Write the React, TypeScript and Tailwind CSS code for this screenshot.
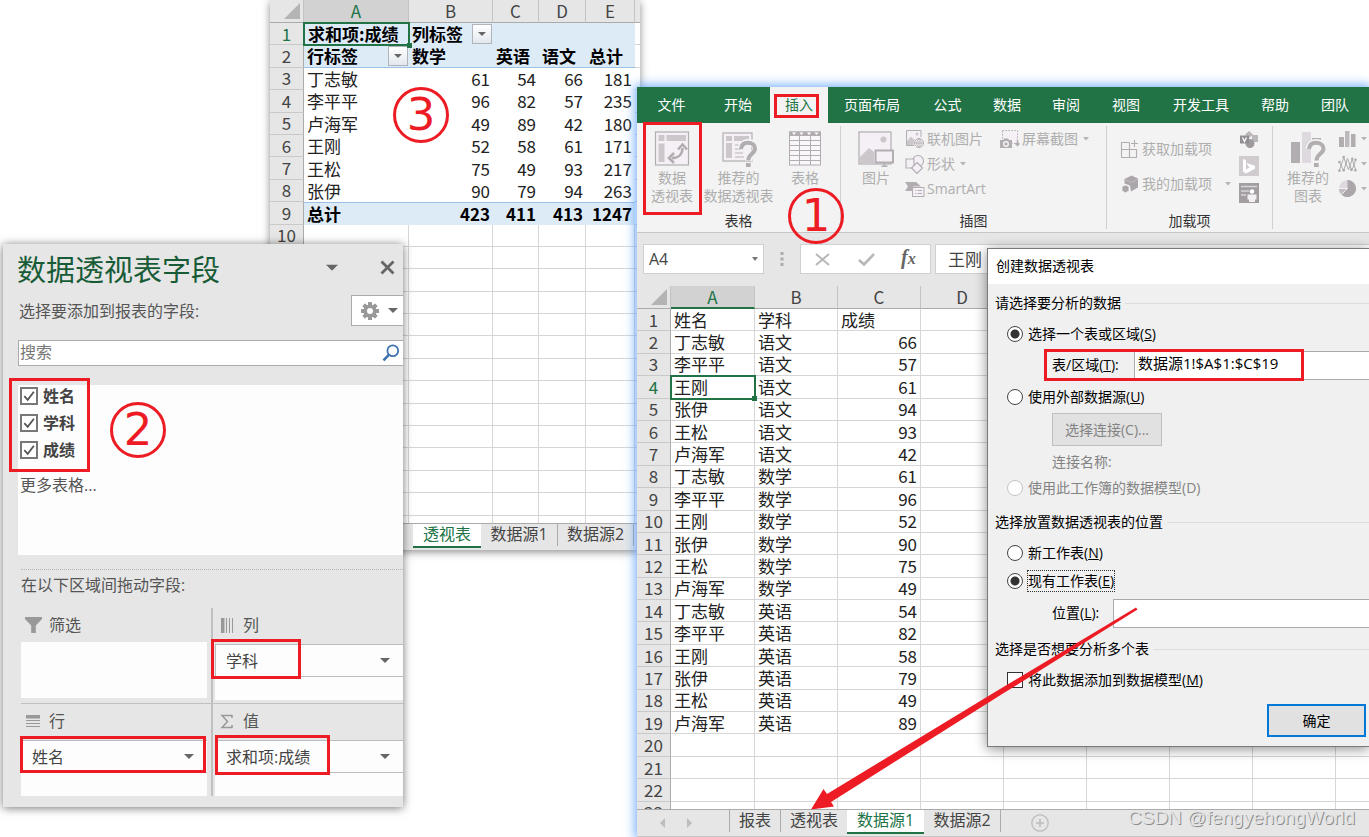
import React from "react";

const names = ["丁志敏", "李平平", "王刚", "张伊", "王松", "卢海军"];
const scores: [string, number[]][] = [
  ["语文", [66, 57, 61, 94, 93, 42]],
  ["数学", [61, 96, 52, 90, 75, 49]],
  ["英语", [54, 82, 58, 79, 49, 89]],
];
const sourceRows: string[][] = [
  ["姓名", "学科", "成绩"],
  ...scores.flatMap(([subject, values]) => values.map((v, i) => [names[i], subject, String(v)])),
];

const pivotRows: string[][] = [
  ["丁志敏", "61", "54", "66", "181"],
  ["李平平", "96", "82", "57", "235"],
  ["卢海军", "49", "89", "42", "180"],
  ["王刚", "52", "58", "61", "171"],
  ["王松", "75", "49", "93", "217"],
  ["张伊", "90", "79", "94", "263"],
];

function Caret({ className = "text-[#666]" }: { className?: string }) {
  return (
    <svg viewBox="0 0 10 5" className={"h-[5px] w-[10px] shrink-0 " + className} fill="currentColor">
      <path d="M0 0h10L5 5z" />
    </svg>
  );
}

function SmallCaret() {
  return (
    <svg viewBox="0 0 6 4" className="h-1 w-1.5 shrink-0 text-[#b5b5b5]" fill="currentColor">
      <path d="M0 0h6L3 3.5z" />
    </svg>
  );
}

function Corner() {
  return (
    <svg viewBox="0 0 16 16" className="mr-[3px] ml-auto h-4 w-4" fill="#b4b4b4">
      <path d="M16 0v16H0z" />
    </svg>
  );
}

function FilterButton() {
  return (
    <button
      aria-label="筛选"
      className="flex h-5 w-5 shrink-0 items-center justify-center border border-[#aeb4bc] bg-linear-to-b from-white to-[#e4e8ee]"
    >
      <svg viewBox="0 0 8 4" className="h-1 w-2" fill="#666">
        <path d="M0 0h8L4 4z" />
      </svg>
    </button>
  );
}

function FillHandle() {
  return <span className="absolute -right-[3px] -bottom-[3px] h-[5px] w-[5px] bg-[#217346]" />;
}

/* ---------- pivot result sheet ---------- */

const headCell = "border-r border-b border-[#c3c3c3] border-b-[#ababab] p-0 text-center font-normal";
const rowHead = "border-r border-b border-r-[#ababab] border-b-[#c9c9c9] bg-[#e6e6e6] p-0 text-center font-normal";
const gridCell = "border-r border-b border-[#d6d6d6] p-0";

function PivotSheet() {
  const blank = Array.from({ length: 14 }, (_, i) => i + 10);
  return (
    <section className="absolute top-0 left-[270px] flex h-[550px] w-[370px] flex-col overflow-hidden bg-[#e6e6e6] shadow-[0_2px_8px_rgba(0,0,0,0.45)]">
      <div className="h-[523px] overflow-hidden bg-white">
        <table className="h-[538px] w-[400px] table-fixed border-separate border-spacing-0 text-[17px] leading-5 text-[#222]">
          <colgroup>
            <col className="w-[34px]" />
            <col className="w-[105px]" />
            <col className="w-[84px]" />
            <col className="w-[46px]" />
            <col className="w-[47px]" />
            <col className="w-[49px]" />
            <col />
          </colgroup>
          <thead>
            <tr className="h-[23px] bg-[#e6e6e6] text-[#444]">
              <th className={headCell}><Corner /></th>
              <th className={headCell + " bg-[#d2d2d2] text-[#217346]"}>A</th>
              {["B", "C", "D", "E", ""].map((c, i) => (
                <th key={i} className={headCell}>{c}</th>
              ))}
            </tr>
          </thead>
          <tbody>
            <tr className="bg-[#ddebf7] font-bold text-black">
              <th className={rowHead + " bg-[#d2d2d2] text-[#217346]"}>1</th>
              <td className="relative p-0 pl-1 whitespace-nowrap outline-2 -outline-offset-1 outline-[#217346]">
                求和项:成绩
                <FillHandle />
              </td>
              <td className="p-0 pl-[3px]">
                <div className="flex items-center justify-between pr-px whitespace-nowrap">
                  列标签
                  <FilterButton />
                </div>
              </td>
              <td colSpan={3} />
              <td className={gridCell + " bg-white"} />
            </tr>
            <tr className="bg-[#ddebf7] font-bold text-black">
              <th className={rowHead + " text-[#444]"}>2</th>
              <td className="border-b border-[#9bc2e6] p-0 pl-[3px]">
                <div className="flex items-center justify-between pr-px">
                  行标签
                  <FilterButton />
                </div>
              </td>
              {["数学", "英语", "语文", "总计"].map((t) => (
                <td key={t} className="border-b border-[#9bc2e6] p-0 pl-[3px] whitespace-nowrap">{t}</td>
              ))}
              <td className={gridCell + " bg-white"} />
            </tr>
            {pivotRows.map((row, i) => (
              <tr key={row[0]}>
                <th className={rowHead + " text-[#444]"}>{i + 3}</th>
                {row.map((v, j) => (
                  <td key={j} className={j === 0 ? "p-0 pl-[3px]" : "p-0 pr-[3px] text-right"}>{v}</td>
                ))}
                <td className={gridCell} />
              </tr>
            ))}
            <tr className="bg-[#ddebf7] font-bold text-black">
              <th className={rowHead + " text-[#444]"}>9</th>
              {["总计", "423", "411", "413", "1247"].map((v, j) => (
                <td
                  key={j}
                  className={"border-t border-[#9bc2e6] p-0 " + (j === 0 ? "pl-[3px]" : "pr-[3px] text-right")}
                >
                  {v}
                </td>
              ))}
              <td className={gridCell + " bg-white"} />
            </tr>
            {blank.map((n) => (
              <tr key={n}>
                <th className={rowHead + " text-[#444]"}>{n}</th>
                {[0, 1, 2, 3, 4, 5].map((c) => (
                  <td key={c} className={gridCell} />
                ))}
              </tr>
            ))}
          </tbody>
        </table>
      </div>
      <nav className="flex h-[27px] items-start border-t border-[#ababab] pl-[143px] font-['Open_Sans','Noto_Sans_CJK_SC',sans-serif] text-base leading-5 text-[#444]">
        <button className="h-6 w-[68px] shrink-0 border-b-2 border-[#217346] bg-white pb-0.5 text-[#217346]">透视表</button>
        <button className="h-[22px] w-[77px] shrink-0 border-r border-[#ababab] pb-0.5">数据源1</button>
        <button className="h-[22px] w-[76px] shrink-0 border-r border-[#ababab] pb-0.5">数据源2</button>
      </nav>
    </section>
  );
}

/* ---------- field list pane ---------- */

function Gear() {
  return (
    <svg viewBox="0 0 20 20" className="h-5 w-5" fill="#999">
      {[0, 45, 90, 135].map((a) => (
        <rect key={a} x="8" y="1" width="4" height="18" rx="0.6" transform={`rotate(${a} 10 10)`} />
      ))}
      <circle cx="10" cy="10" r="6.6" />
      <circle cx="10" cy="10" r="3" fill="#fff" />
    </svg>
  );
}

function FieldCheck({ label }: { label: string }) {
  return (
    <label className="flex h-[27px] items-center gap-[5px] text-base font-bold text-[#444]">
      <span className="relative flex h-[18px] w-[18px]">
        <input type="checkbox" defaultChecked className="peer h-[18px] w-[18px] appearance-none border-2 border-[#777] bg-white" />
        <svg viewBox="0 0 18 18" className="pointer-events-none absolute inset-0 hidden h-[18px] w-[18px] peer-checked:block" fill="none" stroke="#555" strokeWidth="1.8">
          <path d="M4.3 9.2l3.4 3.6 6.2-8" />
        </svg>
      </span>
      {label}
    </label>
  );
}

function FieldItem({ label }: { label: string }) {
  return (
    <button className="mt-0.5 flex h-[33px] w-full items-center justify-between border border-r-0 border-[#bcbcbc] bg-[#fdfdfd] pr-[13px] pl-2.5 text-base text-[#444]">
      {label}
      <Caret />
    </button>
  );
}

function Zone({ icon, title, field }: { icon: React.ReactNode; title: string; field?: string }) {
  return (
    <div>
      <h3 className="flex h-[34px] items-center gap-[7px] pl-1 text-base text-[#555]">
        {icon}
        {title}
      </h3>
      <div className="h-[56px] bg-[#fdfdfd]">{field && <FieldItem label={field} />}</div>
    </div>
  );
}

function FieldPane() {
  return (
    <aside className="absolute top-[244px] left-[3px] h-[563px] w-[400px] overflow-hidden bg-[#e6e6e6] pl-[15px] font-['Open_Sans','Noto_Sans_CJK_SC',sans-serif] shadow-[0_1px_9px_rgba(0,0,0,0.55)]">
      <header className="flex h-[51px] items-center">
        <h2 className="-ml-px text-[29px] leading-[51px] text-[#185c37]">数据透视表字段</h2>
        <button aria-label="选项" className="mr-[43px] ml-auto pb-1">
          <Caret className="scale-125 text-[#666]" />
        </button>
        <button aria-label="关闭" className="mr-2 pb-1">
          <svg viewBox="0 0 15 15" className="h-[15px] w-[15px]" fill="none" stroke="#666" strokeWidth="2.8">
            <path d="M1.5 1.5l12 12M13.5 1.5l-12 12" />
          </svg>
        </button>
      </header>
      <div className="flex h-[31px] items-center justify-between">
        <p className="pl-px text-base text-[#555]">选择要添加到报表的字段:</p>
        <button aria-label="工具" className="flex h-[31px] w-[52px] items-center justify-between border border-r-0 border-[#ababab] bg-white pr-[5px] pl-2">
          <Gear />
          <Caret />
        </button>
      </div>
      <label className="mt-[14px] flex h-[26px] items-center border border-r-0 border-[#ababab] bg-white pr-[3px]">
        <input aria-label="搜索" placeholder="搜索" className="min-w-0 flex-1 pb-0.5 pl-px text-base leading-5 outline-none placeholder:text-[#777]" />
        <svg viewBox="0 0 18 18" className="h-[18px] w-[18px]" fill="none" stroke="#3f73b0">
          <circle cx="10.8" cy="6.8" r="5.4" strokeWidth="1.8" />
          <path d="M6.8 10.8L1.5 16.3" strokeWidth="2.6" />
        </svg>
      </label>
      <div className="mt-[17px] h-[172px] border-t-2 border-[#e6e6e6] bg-[#fdfdfd] pl-0.5">
        <div className="-mt-[3px]">
          <FieldCheck label="姓名" />
          <FieldCheck label="学科" />
          <FieldCheck label="成绩" />
        </div>
        <p className="mt-2.5 text-base leading-6 text-[#555]">更多表格...</p>
      </div>
      <p className="mt-[14px] ml-[3px] border-t border-dotted border-[#b5b5b5] text-base leading-[30px] text-[#555]">在以下区域间拖动字段:</p>
      <div className="mt-2 ml-[3px] grid grid-cols-[192px_1fr]">
        <div className="border-r-2 border-b border-[#c0c0c0] pr-1 pb-[3px]">
          <Zone
            title="筛选"
            icon={
              <svg viewBox="0 0 17 17" className="h-[17px] w-[17px]" fill="#999">
                <path d="M0 0h17v2l-6.2 6.5V16H6.2V8.500L0 2z" />
              </svg>
            }
          />
        </div>
        <div className="border-b border-[#c0c0c0] pb-[3px] pl-0.5">
          <Zone
            title="列"
            field="学科"
            icon={
              <svg viewBox="0 0 17 15" className="h-[15px] w-[17px]" fill="#999">
                <path d="M2 0h3.500v15H2zM7 0h1v15H7zM10 0h1v15h-1zM13 0h1v15h-1z" />
              </svg>
            }
          />
        </div>
        <div className="border-r-2 border-[#c0c0c0] pr-1">
          <Zone
            title="行"
            field="姓名"
            icon={
              <svg viewBox="0 0 17 14" className="h-[14px] w-[17px]" fill="#999">
                <path d="M1 1h14v3.500H1zM1 6h14v1H1zM1 9h14v1H1zM1 12h14v1H1z" />
              </svg>
            }
          />
        </div>
        <div className="pl-0.5">
          <Zone
            title="值"
            field="求和项:成绩"
            icon={
              <svg viewBox="0 0 17 15" className="h-[15px] w-[17px]" fill="none" stroke="#999" strokeWidth="1.5">
                <path d="M13 4V1.500H3l5.500 6L3 13.500h10V11" />
              </svg>
            }
          />
        </div>
      </div>
    </aside>
  );
}

/* ---------- ribbon icons ---------- */

const dark = "#b1adb1";
const pale = "#f5f0f5";
const mid = "#cbc7cb";

function PivotIcon() {
  return (
    <svg viewBox="0 0 36 36" className="h-9 w-9" fill="none">
      <rect x="1.500" y="1" width="33" height="33" fill={pale} stroke={dark} strokeWidth="1.2" />
      <path d="M4.500 4h6v6h-6zM12.500 4h19.500v6H12.500zM4.500 12.500h6V31h-6z" fill={mid} />
      <path d="M18 27c6.500 0 10.500-4 10.500-10" stroke={dark} strokeWidth="2.600" />
      <path d="M24 18.500l4.500-5 4.500 5M20 22l-5 5 5 5" stroke={dark} strokeWidth="2.600" />
    </svg>
  );
}

function RecommendedPivotIcon() {
  return (
    <svg viewBox="0 0 36 36" className="h-9 w-9" fill="none">
      <rect x="2" y="2" width="29" height="28" fill={pale} stroke={dark} strokeWidth="1.200" />
      <path d="M5 5h6v5H5zM13 5h15v5H13zM5 12h6v15H5z" fill={mid} />
      <path d="M14 14h7M14 18h6M14 22h8M14 26h9" stroke={mid} strokeWidth="1.500" />
      <path d="M20 18c.5-4.500 3.500-6.500 7-6.500 4.500 0 8 2.300 8 6 0 5.500-7.200 5.300-7.200 12.500" stroke="#f3f3f3" strokeWidth="7" />
      <path d="M20 18c.5-4.500 3-6.300 6.800-6.300 4.300 0 7.200 2.300 7.200 5.800 0 5.500-6.700 5.300-6.700 12" stroke={dark} strokeWidth="4" />
      <rect x="25" y="32" width="4.600" height="4" fill={dark} />
    </svg>
  );
}

function TableIcon() {
  return (
    <svg viewBox="0 0 36 36" className="h-9 w-9" fill="none">
      <rect x="2.500" y="1" width="31" height="33" fill="#faf7fa" stroke={dark} />
      <path d="M2 .5h32V5H2z" fill={dark} />
      <path d="M5 1.500h4L7 4zM12.500 1.500h4l-2 2.500zM20 1.500h4l-2 2.500zM27.500 1.500h4l-2 2.500z" fill="#fff" />
      <path d="M2 9.500h32M2 14.500h32M2 19.500h32M2 24.500h32M2 29.500h32M12.500 5v29M23.500 5v29" stroke={dark} />
    </svg>
  );
}

function PictureIcon() {
  return (
    <svg viewBox="0 0 36 36" className="h-9 w-9" fill="none">
      <rect x="1" y="1" width="32" height="32" fill={pale} stroke={dark} strokeWidth="1.200" />
      <circle cx="25.500" cy="8.500" r="3" fill={mid} />
      <path d="M2 32V26L11 17l5 4v11z" fill={mid} />
      <rect x="17.500" y="19.500" width="17.500" height="12" fill={pale} stroke={dark} strokeWidth="2" />
      <path d="M26.500 32v3M23.500 35.300h6" stroke={dark} strokeWidth="1.500" />
    </svg>
  );
}

function OnlinePictureIcon() {
  return (
    <svg viewBox="0 0 20 20" className="h-5 w-5" fill="none" stroke={dark}>
      <path d="M9 16.500H1.500v-15h14.500V8" fill={pale} />
      <circle cx="12" cy="5" r="1.500" fill={mid} stroke="none" />
      <path d="M2 16v-4l4-4.500L9.500 11 8 16z" fill={mid} stroke="none" />
      <circle cx="14" cy="14" r="4.500" fill={pale} />
      <path d="M9.500 14h9M14 9.500v9M14 9.500c-3 3-3 6 0 9M14 9.500c3 3 3 6 0 9" strokeWidth=".8" />
    </svg>
  );
}

function ShapesIcon() {
  return (
    <svg viewBox="0 0 20 20" className="h-5 w-5" fill={pale} stroke={dark} strokeWidth="1.100">
      <circle cx="13" cy="7" r="5.500" />
      <path d="M1 5h8v9H1z" />
      <path d="M12 8.500l5.500 5.500-5.500 5.500L6.500 14z" />
    </svg>
  );
}

function SmartArtIcon() {
  return (
    <svg viewBox="0 0 20 20" className="h-5 w-5">
      <path d="M0 3h11l5 4.500H8V12H0l3-4.500z" fill={dark} />
      <rect x="7.500" y="8.500" width="11.500" height="9" fill={pale} stroke={dark} />
      <path d="M10 11.500h1.200M10 14.500h1.200M12.500 11.500h4.500M12.500 14.500h4.500" stroke={dark} />
    </svg>
  );
}

function ScreenshotIcon() {
  return (
    <svg viewBox="0 0 20 20" className="h-5 w-5" fill="none">
      <rect x="2.500" y="1.500" width="15" height="13" fill={pale} stroke={dark} strokeDasharray="1.500 1.500" />
      <path d="M0 11h3l1-1.500h4L9 11h3v8H0z" fill={dark} />
      <circle cx="6" cy="15" r="2.300" stroke="#fff" strokeWidth="1.200" />
      <path d="M17.500 10.500v6M15.500 14.500h4M15.500 14.500l2 2 2-2" stroke={dark} strokeWidth="1.400" />
    </svg>
  );
}

function GetAddinIcon() {
  return (
    <svg viewBox="0 0 20 20" className="h-5 w-5" fill="none" stroke={dark} strokeWidth="1.100">
      <path d="M9.500 3.500h-8v15h15v-8h-15M9.500 3.500v15M14.500 1v7M11 4.500h7" />
    </svg>
  );
}

function MyAddinIcon() {
  return (
    <svg viewBox="0 0 20 20" className="h-5 w-5" fill="#aaa6aa">
      <path d="M4.500 5l7-3.500L18 4.500v9L11 17.500l-1-6-5.500-2z" />
      <path d="M4.500 5.500L11 8.500l7-3.500" fill="none" stroke="#c4c0c4" strokeWidth=".8" />
      <path d="M2 12.500l3.500-1.500L9 12.500v4.500L5.500 18.800 2 17z" stroke="#f3f3f3" strokeWidth=".8" />
    </svg>
  );
}

function VisioIcon() {
  return (
    <svg viewBox="0 0 18 18" className="h-[18px] w-[18px]">
      <path d="M9 0l4 3.500L9 7 5 3.500zM12 4h6v7h-6z" fill="#bbb7bb" />
      <circle cx="10" cy="12.500" r="4.500" fill="#9f9b9f" />
      <path d="M0 4.500h9v8H0z" fill="#928e92" />
      <path d="M2.500 6.500l2 4 2-4" fill="none" stroke="#fff" strokeWidth="1.300" />
    </svg>
  );
}

function BingIcon() {
  return (
    <svg viewBox="0 0 20 20" className="h-5 w-5">
      <path d="M0 0h20v20H0z" fill="#cfcbcf" />
      <path d="M4 3l3 1v9.500l4-2.300-2-1L7.500 7 16 9.700v3L7 17.500l-3-1.700z" fill="#fff" />
    </svg>
  );
}

function PeopleGraphIcon() {
  return (
    <svg viewBox="0 0 20 20" className="h-5 w-5">
      <path d="M0 0h20v20H0z" fill="#a19da1" />
      <path d="M2 3.500h16M2 8h8M2 12h5" stroke="#d8d5d8" strokeWidth="1.500" />
      <circle cx="13" cy="8.500" r="2.300" fill="#fff" />
      <path d="M8.500 11.500h9v5h-1.500v2.500h-6v-2.500H8.500z" fill="#f3f0f3" />
    </svg>
  );
}

function RecommendedChartIcon() {
  return (
    <svg viewBox="0 0 36 36" className="h-9 w-9" fill="none">
      <path d="M1 11h9v21H1z" fill={dark} />
      <path d="M12 1h9v31h-9z" fill="#ded9de" />
      <path d="M22 7h9v3h-9z" fill={dark} />
      <path d="M19 18c.5-4.500 3.500-6.500 7-6.500 4.500 0 8 2.300 8 6 0 5.500-7.500 5.300-7.500 12.500" stroke="#f3f3f3" strokeWidth="7" />
      <path d="M19 18c.5-4.500 3-6.300 6.800-6.300 4.300 0 7.700 2.300 7.700 5.800 0 5.500-7 5.300-7 12" stroke={dark} strokeWidth="4" />
      <rect x="24" y="32" width="4.600" height="4" fill={dark} />
    </svg>
  );
}

function BarIcon() {
  return (
    <svg viewBox="0 0 19 18" className="h-[18px] w-[19px]">
      <path d="M1 7h5v10H1zM13 4h4.500v13H13z" fill={dark} />
      <path d="M7 1h4.500v16H7z" fill="#bdb9bd" />
    </svg>
  );
}

function LineIcon() {
  return (
    <svg viewBox="0 0 20 20" className="h-5 w-[19px]" fill="none" stroke="#a9a6a9" strokeWidth="1">
      <path d="M1.500 8L6 17 10 4l4.500 13L18.500 6M1.500 17L6 3l5 13 4-11 3.500 11" />
      <g fill="#a9a6a9" stroke="none">
        <circle cx="1.500" cy="8" r="1.300" /><circle cx="6" cy="16.500" r="1.300" /><circle cx="6" cy="2.500" r="1.300" />
        <circle cx="14" cy="16" r="1.300" /><circle cx="18.500" cy="5.500" r="1.300" /><circle cx="1.500" cy="17" r="1.300" />
        <circle cx="18.300" cy="16.500" r="1.300" /><circle cx="15" cy="4.500" r="1.300" />
      </g>
    </svg>
  );
}

function PieIcon() {
  return (
    <svg viewBox="0 0 20 20" className="h-[19px] w-[19px]">
      <circle cx="10" cy="10" r="9" fill="#ded9de" />
      <path d="M10 10V1a9 9 0 1 1-6.400 15.400z" fill="#aaa6aa" />
      <path d="M10 10l-6.400 6.400A9 9 0 0 1 1 10z" fill="#c0bcc0" />
      <path d="M1 10h9l-6.400 6.400" fill="none" stroke="#fff" strokeWidth=".8" />
    </svg>
  );
}

/* ---------- main workbook window ---------- */

const tabs: [string, string][] = [
  ["文件", "w-[69px]"],
  ["开始", "w-[64px]"],
  ["插入", "w-[58px] bg-[#f3f3f3] text-[#217346]"],
  ["页面布局", "w-[88px]"],
  ["公式", "w-[63px]"],
  ["数据", "w-[56px]"],
  ["审阅", "w-[62px]"],
  ["视图", "w-[58px]"],
  ["开发工具", "w-[92px]"],
  ["帮助", "w-[56px]"],
  ["团队", "w-[64px]"],
];

function BigButton({ icon, lines, width }: { icon: React.ReactNode; lines: string[]; width: string }) {
  return (
    <button className={"flex shrink-0 flex-col items-center pt-[5px] text-sm leading-[18px] text-[#aeaeae] " + width}>
      {icon}
      <span className="mt-0.5 flex flex-col items-center whitespace-nowrap">
        {lines.map((l) => (
          <span key={l}>{l}</span>
        ))}
      </span>
    </button>
  );
}

function SmallButton({ icon, label, menu, gap = "gap-[5px]" }: { icon: React.ReactNode; label: string; menu?: boolean; gap?: string }) {
  return (
    <button className={"flex h-[25px] items-center text-sm whitespace-nowrap text-[#aeaeae] " + gap}>
      <span className="flex items-center gap-0.5">
        {icon}
        {label}
      </span>
      {menu && <SmallCaret />}
    </button>
  );
}

function Group({ label, width, pad, children }: { label: string; width: string; pad: string; children: React.ReactNode }) {
  return (
    <div className={"my-[3px] flex shrink-0 flex-col border-r border-[#cfcfcf] " + width}>
      <div className={"flex flex-1 items-start " + pad}>{children}</div>
      <p className="text-center text-sm leading-4 text-[#333]">{label}</p>
    </div>
  );
}

function Ribbon() {
  return (
    <div className="flex h-[110px] shrink-0 overflow-hidden border-b border-[#c6c6c6] bg-[#f3f3f3]">
      <Group label="表格" width="w-[204px]" pad="pl-1.5">
        <BigButton icon={<PivotIcon />} lines={["数据", "透视表"]} width="w-[58px]" />
        <BigButton icon={<RecommendedPivotIcon />} lines={["推荐的", "数据透视表"]} width="w-[75px]" />
        <BigButton icon={<TableIcon />} lines={["表格"]} width="w-[58px]" />
      </Group>
      <Group label="插图" width="w-[266px]" pad="pl-1.5">
        <BigButton icon={<PictureIcon />} lines={["图片"]} width="w-[58px]" />
        <div className="flex w-[95px] flex-col">
          <SmallButton icon={<OnlinePictureIcon />} label="联机图片" />
          <SmallButton icon={<ShapesIcon />} label="形状" menu />
          <SmallButton icon={<SmartArtIcon />} label="SmartArt" />
        </div>
        <SmallButton icon={<ScreenshotIcon />} label="屏幕截图" menu />
      </Group>
      <Group label="加载项" width="w-[166px]" pad="pl-[13px]">
        <div className="flex w-[119px] flex-col gap-2.5 pt-2.5">
          <SmallButton icon={<GetAddinIcon />} label="获取加载项" />
          <SmallButton icon={<MyAddinIcon />} label="我的加载项" menu gap="gap-[13px]" />
        </div>
        <div className="flex flex-col items-center gap-[7px] pt-[5px]">
          <button aria-label="Visio"><VisioIcon /></button>
          <button aria-label="Bing"><BingIcon /></button>
          <button aria-label="People Graph"><PeopleGraphIcon /></button>
        </div>
      </Group>
      <div className="my-[3px] flex flex-1 items-start pl-[7px]">
        <BigButton icon={<RecommendedChartIcon />} lines={["推荐的", "图表"]} width="w-[56px]" />
        <div className="flex flex-col pl-0.5">
          {[<BarIcon key="b" />, <LineIcon key="l" />, <PieIcon key="p" />].map((icon, i) => (
            <button key={i} aria-label="图表" className="flex h-[25px] items-center gap-1">
              {icon}
              <SmallCaret />
            </button>
          ))}
        </div>
      </div>
    </div>
  );
}

function FormulaBar() {
  return (
    <div className="flex h-[53px] shrink-0 items-start pt-[11px] pl-1.5 text-[#444]">
      <button className="flex h-[30px] w-[121px] items-center justify-between border border-[#d0d0d0] bg-white px-[5px] text-base">
        A4
        <svg viewBox="0 0 6 4" className="h-1 w-1.5" fill="#777"><path d="M0 0h6L3 4z" /></svg>
      </button>
      <svg viewBox="0 0 4 14" className="mt-2 ml-4 h-[14px] w-1" fill="#ababab">
        <path d="M.5 0h3v3h-3zM.5 5.500h3v3h-3zM.5 11h3v3h-3z" />
      </svg>
      <div className="ml-4 flex h-[30px] w-[131px] items-center border border-[#d0d0d0] bg-white pl-[14px]">
        <button aria-label="取消">
          <svg viewBox="0 0 15 13" className="h-[13px] w-[15px]" fill="none" stroke="#b8b8b8" strokeWidth="2"><path d="M1 1l13 11M14 1L1 12" /></svg>
        </button>
        <button aria-label="输入" className="ml-7">
          <svg viewBox="0 0 17 13" className="h-[13px] w-[17px]" fill="none" stroke="#b8b8b8" strokeWidth="2.600"><path d="M1 7l5 4.500L16 1" /></svg>
        </button>
        <button aria-label="插入函数" className="ml-[26px] pb-0.5 font-['Liberation_Serif',serif] text-[20px] leading-6 font-bold text-[#666] italic">
          f<span className="text-base">x</span>
        </button>
      </div>
      <input
        aria-label="编辑栏"
        defaultValue="王刚"
        className="ml-1 h-[30px] min-w-0 flex-1 border border-r-0 border-[#d0d0d0] bg-white pb-0.5 pl-3 text-[17px] outline-none"
      />
    </div>
  );
}

function SourceSheet() {
  const letters = ["B", "C", "D", "E", "F", "G", "H", "I"];
  const rows = Array.from({ length: 23 }, (_, i) => i);
  return (
    <div className="min-h-0 flex-1 overflow-hidden bg-white font-['Noto_Sans_CJK_SC',sans-serif]">
      <table className="h-[538px] w-[782px] table-fixed border-separate border-spacing-0 text-[17px] leading-5 text-[#222]">
        <colgroup>
          <col className="w-[34px]" />
          <col className="w-[84px]" />
          {letters.map((l) => (
            <col key={l} className="w-[83px]" />
          ))}
        </colgroup>
        <thead>
          <tr className="h-[23px] bg-[#e6e6e6] text-[#444]">
            <th className={headCell}><Corner /></th>
            <th className="border-r border-b-2 border-r-[#c3c3c3] border-b-[#217346] bg-[#d2d2d2] p-0 font-normal text-[#217346]">A</th>
            {letters.map((l) => (
              <th key={l} className={headCell}>{l}</th>
            ))}
          </tr>
        </thead>
        <tbody>
          {rows.map((r) => (
            <tr key={r}>
              <th className={rowHead + (r === 3 ? " bg-[#d2d2d2] text-[#217346]" : " text-[#444]")}>{r + 1}</th>
              {["A", ...letters].map((l, c) => {
                const value = sourceRows[r]?.[c] ?? "";
                const selected = r === 3 && c === 0;
                return (
                  <td
                    key={l}
                    className={
                      gridCell +
                      (c === 2 && r > 0 ? " pr-[3px] text-right" : " pl-[3px]") +
                      (selected ? " relative outline-2 -outline-offset-1 outline-[#217346]" : "")
                    }
                  >
                    {value}
                    {selected && <FillHandle />}
                  </td>
                );
              })}
            </tr>
          ))}
        </tbody>
      </table>
    </div>
  );
}

function SheetTabs() {
  return (
    <nav className="flex h-7 shrink-0 items-start border-t border-b border-[#ababab] border-b-[#c6c6c6] bg-[#e6e6e6] text-base leading-5 text-[#444]">
      <div className="flex h-[26px] w-[92px] items-center gap-[22px] pl-[23px]">
        <svg viewBox="0 0 5 10" className="h-2.5 w-[5px]" fill="#bdbdbd"><path d="M5 0v10L0 5z" /></svg>
        <svg viewBox="0 0 5 10" className="h-2.5 w-[5px]" fill="#bdbdbd"><path d="M0 0v10l5-5z" /></svg>
      </div>
      <button className="h-[22px] w-[52px] border-x border-[#ababab] pb-0.5">报表</button>
      <button className="h-[22px] w-[66px] pb-0.5">透视表</button>
      <button className="h-6 w-[77px] border-b-2 border-[#217346] bg-white pb-0.5 text-[#217346]">数据源1</button>
      <button className="h-[22px] w-[77px] border-r border-[#ababab] pb-0.5">数据源2</button>
      <button aria-label="新工作表" className="mt-1 ml-[30px]">
        <svg viewBox="0 0 18 18" className="h-[18px] w-[18px]" fill="none" stroke="#bdbdbd" strokeWidth="1.300">
          <circle cx="9" cy="9" r="8.200" />
          <path d="M9 5v8M5 9h8" strokeWidth="1.600" />
        </svg>
      </button>
    </nav>
  );
}

function Workbook() {
  return (
    <section className="absolute top-[87px] right-0 bottom-0 left-[637px] flex flex-col bg-[#e6e6e6] font-['Open_Sans','Noto_Sans_CJK_SC',sans-serif] shadow-[0_0_10px_2px_rgba(70,150,255,0.75)]">
      <nav className="flex h-9 shrink-0 overflow-hidden bg-[#217346] text-sm text-white">
        {tabs.map(([label, cls]) => (
          <button key={label} className={"shrink-0 " + cls}>{label}</button>
        ))}
      </nav>
      <Ribbon />
      <FormulaBar />
      <SourceSheet />
      <SheetTabs />
    </section>
  );
}

/* ---------- dialog ---------- */

function Legend({ children }: { children: React.ReactNode }) {
  return (
    <h3 className="flex h-[38px] items-center gap-1 pl-[7px]">
      {children}
      <span className="h-px flex-1 bg-[#dcdcdc]" />
    </h3>
  );
}

function Radio({ name, label, k, checked, disabled, focus }: { name: string; label: string; k: string; checked?: boolean; disabled?: boolean; focus?: boolean }) {
  return (
    <label className={"flex h-6 items-center gap-[5px] pl-[19px] " + (disabled ? "text-[#838383]" : "")}>
      <input
        type="radio"
        name={name}
        defaultChecked={checked}
        disabled={disabled}
        className="h-4 w-4 appearance-none rounded-full border border-[#444] bg-white checked:bg-[radial-gradient(circle,#333_0_4px,#fff_5px)] disabled:border-[#c4c4c4]"
      />
      <span className={focus ? "leading-5 outline-1 outline-[#333] outline-dotted" : ""}>
        {label}({disabled ? k : <u>{k}</u>})
      </span>
    </label>
  );
}

function Dialog() {
  return (
    <form
      role="dialog"
      aria-label="创建数据透视表"
      onSubmit={(e) => e.preventDefault()}
      className="absolute top-[248px] right-0 left-[987px] border border-r-0 border-[#7a7a7a] bg-[#f0f0f0] pb-[9px] font-['Open_Sans','Noto_Sans_CJK_SC',sans-serif] text-sm text-black shadow-[0_2px_12px_rgba(0,0,0,0.45)]"
    >
      <h2 className="h-[35px] bg-white pl-2 leading-[34px]">创建数据透视表</h2>
      <Legend>请选择要分析的数据</Legend>
      <Radio name="source" label="选择一个表或区域" k="S" checked />
      <div className="mt-[5px] flex h-7 items-center pl-16">
        <label htmlFor="range" className="w-[82px]">表/区域(<u>T</u>):</label>
        <input id="range" defaultValue="数据源1!$A$1:$C$19" className="h-[29px] min-w-0 flex-1 border border-r-0 border-[#ababab] bg-white pb-[5px] pl-[3px] text-[15px] outline-none" />
      </div>
      <div className="mt-1.5">
        <Radio name="source" label="使用外部数据源" k="U" />
      </div>
      <button type="button" disabled className="mt-1 ml-16 flex h-[33px] w-[110px] items-center justify-center border border-[#bfbfbf] bg-[#e1e1e1] text-[#838383]">
        选择连接(C)...
      </button>
      <p className="mt-1 pl-16 leading-6 text-[#838383]">连接名称:</p>
      <div className="mt-0.5">
        <Radio name="source" label="使用此工作簿的数据模型" k="D" disabled />
      </div>
      <div className="mt-[3px]">
        <Legend>选择放置数据透视表的位置</Legend>
      </div>
      <Radio name="target" label="新工作表" k="N" />
      <div className="mt-1">
        <Radio name="target" label="现有工作表" k="E" checked focus />
      </div>
      <div className="mt-1.5 flex h-7 items-center pl-16">
        <label htmlFor="location" className="w-[61px]">位置(<u>L</u>):</label>
        <input id="location" className="h-[29px] min-w-0 flex-1 border border-r-0 border-[#ababab] bg-white pl-[3px] outline-none" />
      </div>
      <div className="mt-[3px]">
        <Legend>选择是否想要分析多个表</Legend>
      </div>
      <label className="flex h-6 items-center gap-[5px] pl-[19px]">
        <input type="checkbox" className="h-4 w-4 appearance-none border border-[#333] bg-white" />
        <span>将此数据添加到数据模型(<u>M</u>)</span>
      </label>
      <button type="submit" className="mt-3 mr-[3px] ml-auto flex h-[33px] w-[99px] items-center justify-center border-2 border-[#0078d7] bg-[#e1e1e1]">
        确定
      </button>
    </form>
  );
}

/* ---------- annotations ---------- */

function Mark({ place }: { place: string }) {
  return <div className={"absolute border-3 border-[#ed1c24] " + place} />;
}

function Step({ n, place }: { n: number; place: string }) {
  return (
    <div
      className={
        "absolute flex h-14 w-14 items-center justify-center rounded-full border-[3px] border-[#ed1c24] pb-px font-['DejaVu_Sans',sans-serif] text-[45px] leading-none text-[#ed1c24] " +
        place
      }
    >
      {n}
    </div>
  );
}

function Annotations() {
  return (
    <div className="pointer-events-none absolute inset-0">
      <Step n={3} place="top-[87px] left-[393px]" />
      <Step n={2} place="top-[402px] left-[110px]" />
      <Step n={1} place="top-[188px] left-[788px]" />
      <Mark place="top-[94px] left-[774px] h-6 w-[45px]" />
      <Mark place="top-[122px] left-[643px] h-[93px] w-[59px]" />
      <Mark place="top-[378px] left-[9px] h-[94px] w-[81px]" />
      <Mark place="top-[639px] left-[211px] h-10 w-[90px]" />
      <Mark place="top-[736px] left-5 h-[37px] w-[186px]" />
      <Mark place="top-[735px] left-[215px] h-10 w-[115px]" />
      <Mark place="top-[349px] left-[1044px] h-8 w-[260px]" />
      <svg viewBox="0 0 328 204" className="absolute top-[607px] left-[810px] h-[204px] w-[328px]" fill="#ed1c24">
        <path d="M326 .5L190 82 17 187l-3.500-5L1 202.500l23-3-3-4.500L193 86.500 327.500 2.500z" />
      </svg>
      <p className="absolute right-[14px] bottom-[7px] font-['Liberation_Sans',sans-serif] text-[19px] leading-6 text-[#e4e4e4] [text-shadow:1px_1px_0_#8c8c8c]">
        CSDN @fengyehongWorld
      </p>
    </div>
  );
}

export default function App() {
  return (
    <main className="relative h-screen w-full overflow-hidden bg-white font-['Noto_Sans_CJK_SC',sans-serif]">
      <PivotSheet />
      <FieldPane />
      <Workbook />
      <Dialog />
      <Annotations />
    </main>
  );
}
